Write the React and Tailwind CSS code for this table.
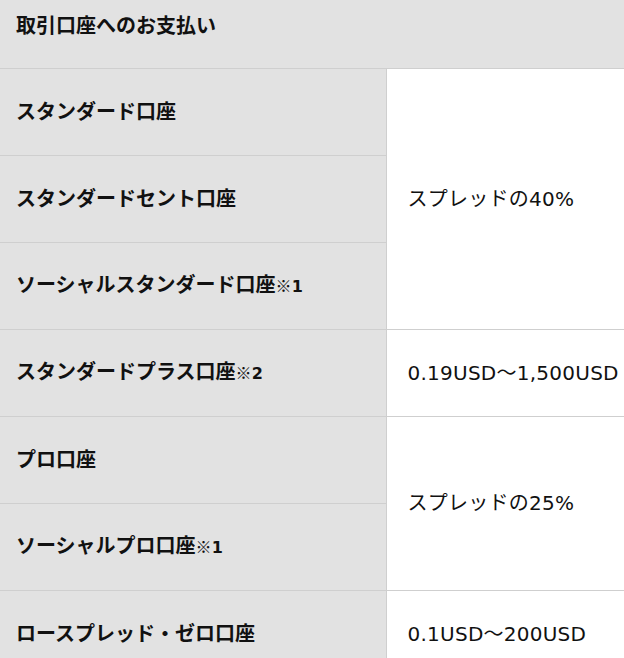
import React from "react";

const rows = [
  { label: "スタンダード口座" },
  { label: "スタンダードセント口座" },
  { label: "ソーシャルスタンダード口座", note: "1" },
  { label: "スタンダードプラス口座", note: "2" },
  { label: "プロ口座" },
  { label: "ソーシャルプロ口座", note: "1" },
  { label: "ロースプレッド・ゼロ口座" },
];

// right column: value + how many left rows it spans
const values = {
  0: { text: "スプレッドの40%", span: 3 },
  3: { text: "0.19USD～1,500USD", span: 1 },
  4: { text: "スプレッドの25%", span: 2 },
  6: { text: "0.1USD～200USD", span: 1 },
};

const App = () => {
  return (
    <div
      className="w-[624px] h-[658px] overflow-hidden bg-white text-[#111]"
      style={{ fontFamily: '"DejaVu Sans", "Noto Sans CJK JP", sans-serif' }}
    >
      <table className="w-[660px] border-collapse text-[20px] leading-[30px]">
        <thead>
          <tr>
            <th
              colSpan={2}
              className="h-[68px] bg-[#e2e2e2] border-b border-[#cfcfcf] pl-4 text-left align-top pt-[11px] font-bold"
            >
              取引口座へのお支払い
            </th>
          </tr>
        </thead>
        <tbody>
          {rows.map((row, i) => (
            <tr key={i}>
              <td className="w-[386px] h-[87px] bg-[#e2e2e2] border-b border-r border-[#cfcfcf] pl-4 font-bold whitespace-nowrap">
                {row.label}
                {row.note && (
                  <span className="text-[16px]">
                    <span className="font-normal font-['Noto_Sans_CJK_JP']">※</span>
                    {row.note}
                  </span>
                )}
              </td>
              {values[i] && (
                <td
                  rowSpan={values[i].span}
                  className="bg-white border-b border-[#cfcfcf] pl-[21px] whitespace-nowrap tracking-[0.25px]"
                >
                  {values[i].text}
                </td>
              )}
            </tr>
          ))}
        </tbody>
      </table>
    </div>
  );
};

export default App;
